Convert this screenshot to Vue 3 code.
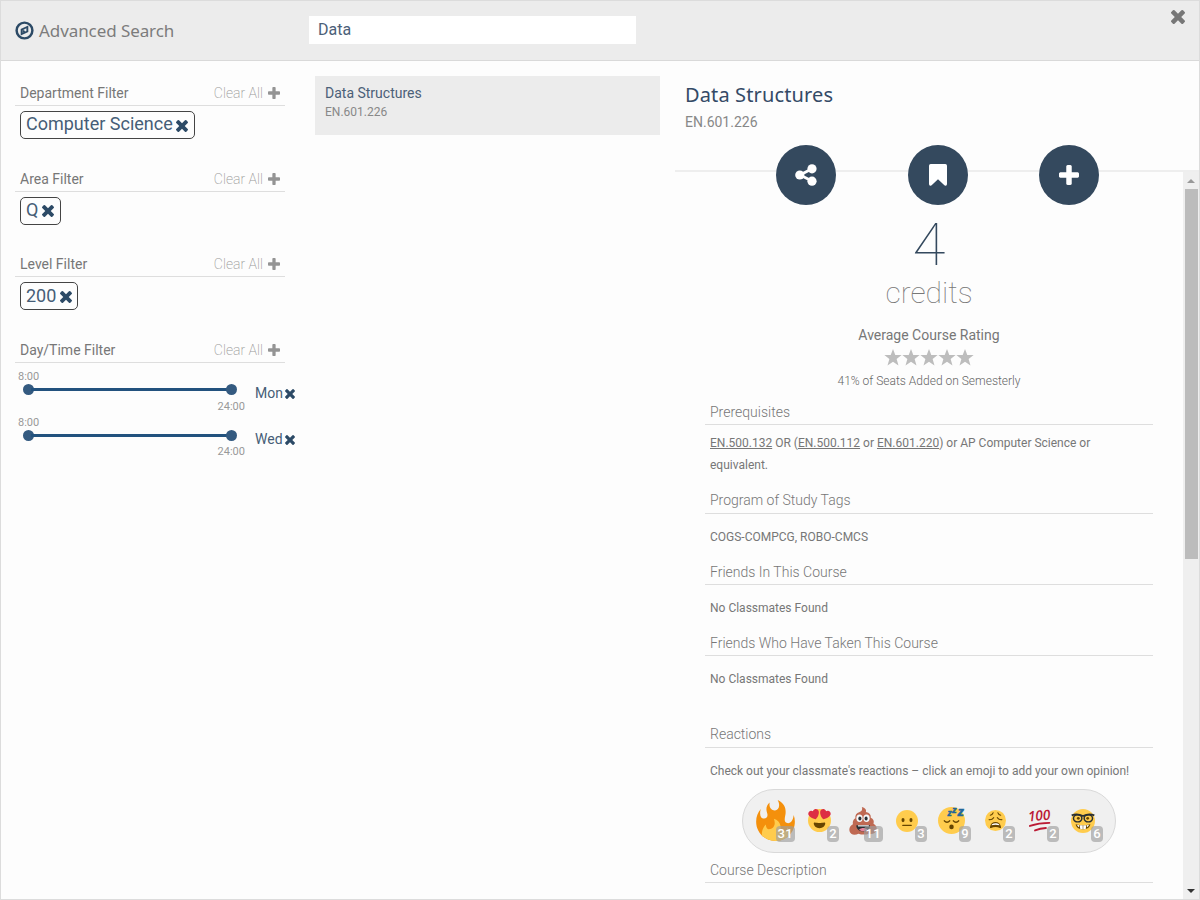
<script setup>
const filters = [
  { name: 'Department Filter', tag: 'Computer Science', cls: 'dept' },
  { name: 'Area Filter', tag: 'Q', cls: 'area' },
  { name: 'Level Filter', tag: '200', cls: 'level' },
]
const days = ['Mon', 'Wed']
const plus = 'M1600 736v192q0 40-28 68t-68 28h-416v416q0 40-28 68t-68 28h-192q-40 0-68-28t-28-68v-416h-416q-40 0-68-28t-28-68v-192q0-40 28-68t68-28h416v-416q0-40 28-68t68-28h192q40 0 68 28t28 68v416h416q40 0 68 28t28 68z'
const times = 'M1490 1322q0 40-28 68l-136 136q-28 28-68 28t-68-28l-294-294-294 294q-28 28-68 28t-68-28l-136-136q-28-28-28-68t28-68l294-294-294-294q-28-28-28-68t28-68l136-136q28-28 68-28t68 28l294 294 294-294q28-28 68-28t68 28l136 136q28 28 28 68t-28 68l-294 294 294 294q28 28 28 68z'
const reactions = [
  { id: 'fire', n: 31, size: 41 },
  { id: 'love', n: 2, size: 23 },
  { id: 'poop', n: 11, size: 28 },
  { id: 'neutral', n: 3, size: 22 },
  { id: 'sleep', n: 9, size: 27 },
  { id: 'weary', n: 2, size: 21 },
  { id: 'hundred', n: 2, size: 23 },
  { id: 'nerd', n: 6, size: 24 },
]
</script>

<template>
  <div class="modal">
    <header class="top">
      <svg class="compass" viewBox="0 0 20 20">
        <circle cx="10" cy="10" r="8.3" fill="none" stroke="currentColor" stroke-width="2.6" />
        <path fill="currentColor" fill-rule="evenodd" d="M14 4.8v6.7l-8 3.7V8.5zM8 9.8v2.6l4-2V7.6z" />
        <path fill="currentColor" d="M8 9.3l3.2 1.6L8 12.9z" />
      </svg>
      <h1>Advanced Search</h1>
      <div class="search">Data</div>
      <svg class="close" viewBox="302 366 1188 1188"><path fill="currentColor" :d="times" /></svg>
    </header>

    <div class="main">
      <aside class="filters">
        <section v-for="f in filters" :key="f.name" class="filter" :class="f.cls">
          <div class="fhead">
            <span>{{ f.name }}</span><span class="clear">Clear All</span>
            <svg class="plus" viewBox="192 128 1408 1408"><path fill="currentColor" :d="plus" /></svg>
          </div>
          <div class="tag"><span>{{ f.tag }}</span><svg viewBox="302 366 1188 1188"><path fill="currentColor" :d="times" /></svg></div>
        </section>
        <section class="filter">
          <div class="fhead">
            <span>Day/Time Filter</span><span class="clear">Clear All</span>
            <svg class="plus" viewBox="192 128 1408 1408"><path fill="currentColor" :d="plus" /></svg>
          </div>
          <div v-for="d in days" :key="d" class="day">
            <div class="slider">
              <div class="t1">8:00</div>
              <div class="track"><i></i><b></b><i></i></div>
              <div class="t2">24:00</div>
            </div>
            <div class="dname"><span>{{ d }}</span><svg viewBox="302 366 1188 1188"><path fill="currentColor" :d="times" /></svg></div>
          </div>
        </section>
      </aside>

      <div class="results">
        <div class="result">
          <div class="rname">Data Structures</div>
          <div class="rcode">EN.601.226</div>
        </div>
      </div>

      <article class="course">
        <div class="chead">
          <h2>Data Structures</h2>
          <div class="ccode">EN.601.226</div>
          <div class="actions">
            <div class="act"><svg width="22" height="22" viewBox="0 0 22 22"><path d="M17 4.7L5 11l12 6" fill="none" stroke="#fff" stroke-width="2.8" /><circle cx="17" cy="4.8" r="4.6" fill="#fff" /><circle cx="4.8" cy="11" r="4.6" fill="#fff" /><circle cx="17" cy="17.2" r="4.6" fill="#fff" /></svg></div>
            <div class="act"><svg width="18" height="22" viewBox="0 0 18 22"><path fill="#fff" d="M1.7 0h14.6Q18 0 18 1.7V20q0 2-1.6 1.8-.7-.1-1.3-.7L9 15.3l-6.1 5.8q-.6.6-1.3.7Q0 22 0 20V1.7Q0 0 1.7 0z" /></svg></div>
            <div class="act"><svg width="20" height="20" viewBox="192 128 1408 1408"><path fill="#fff" :d="plus" /></svg></div>
          </div>
        </div>
        <div class="cbody">
          <div class="detail">
            <div class="num">4</div>
            <div class="credits">credits</div>
            <div class="avg">Average Course Rating</div>
            <div class="stars"><svg v-for="s in 5" :key="s" viewBox="0 0 24 23"><path fill="#bdbdbd" d="M12 0l3.100 8h8.600l-6.800 5.400 2.500 9L12 17.400l-7.400 5 2.500-9L.300 8h8.600z" /></svg></div>
            <div class="seats">41% of Seats Added on Semesterly</div>

            <section class="s1"><h3>Prerequisites</h3><p><u>EN.500.132</u> OR (<u>EN.500.112</u> or <u>EN.601.220</u>) or AP Computer Science or<br>equivalent.</p></section>
            <section class="s2"><h3>Program of Study Tags</h3><p class="cogs">COGS-COMPCG, ROBO-CMCS</p></section>
            <section class="s3"><h3>Friends In This Course</h3><p>No Classmates Found</p></section>
            <section class="s4"><h3>Friends Who Have Taken This Course</h3><p>No Classmates Found</p></section>
            <section class="s5"><h3>Reactions</h3><p class="check">Check out your classmate's reactions – click an emoji to add your own opinion!</p>
              <div class="pill">
                <div v-for="r in reactions" :key="r.id" class="slot">
                  <svg :width="r.size" :height="r.size" viewBox="0 0 36 36">
                    <template v-if="r.id === 'fire'">
                      <path fill="#F4900C" d="M35 19c0-2.062-.367-4.039-1.04-5.868-.46 5.389-3.333 8.157-6.335 6.868-2.812-1.208-.917-5.917-.777-8.164.236-3.809-.012-8.169-6.931-11.794 2.875 5.5.333 8.917-2.333 9.125-2.958.231-5.667-2.542-4.667-7.042-3.238 2.386-3.332 6.402-2.333 9 1.042 2.708-.042 4.958-2.583 5.208-2.84.28-4.418-3.041-2.963-8.333C2.52 10.965 1 14.805 1 19c0 9.389 7.611 17 17 17s17-7.611 17-17z" />
                      <path fill="#FFCC4D" d="M28.394 23.999c.148 3.084-2.561 4.293-4.019 3.709-2.106-.843-1.541-2.291-2.083-5.291s-2.625-5.083-5.708-6c2.25 6.333-1.247 8.667-3.08 9.084-1.872.426-3.753-.001-3.968-4.007C7.352 23.668 6 26.676 6 30c0 .368.023.73.055 1.09C9.125 34.124 13.342 36 18 36s8.875-1.876 11.945-4.91c.032-.36.055-.722.055-1.09 0-2.187-.584-4.236-1.606-6.001z" />
                    </template>
                    <template v-else-if="r.id === 'poop'">
                      <path fill="#BF6952" d="M16.5 0c4.3 1 6.2 3.400 5.300 6.400 4.600.8 6.700 3.500 6.200 7.400 3.500 1.700 4.600 4.300 3.500 7.700 3.500 1.700 4.900 4.900 3.900 8.200-1.300 4.700-6.200 6-10 4.600-4.300 1.600-9 1.500-13.200 0C7.500 37 1.600 35.800.600 31c-.8-4 1-7.400 4.400-8.900-.5-3 .4-5.900 3.200-7.500-.6-4.300 1.300-7 5.400-8.300C16.500 5.400 17.700 3.500 16.500 0z" />
                      <ellipse cx="13.500" cy="14.500" rx="4" ry="4.700" fill="#F5F8FA" /><ellipse cx="22.500" cy="14.500" rx="4" ry="4.700" fill="#F5F8FA" />
                      <ellipse cx="14" cy="14.800" rx="2" ry="2.700" fill="#292F33" /><ellipse cx="22" cy="14.800" rx="2" ry="2.700" fill="#292F33" />
                      <path fill="#292F33" d="M9.500 23.500h17.500c.7 4-3.300 8-8.800 8s-9.300-4-8.700-8z" /><path fill="#F5F8FA" d="M11.500 23.500h14v1.500h-14z" /><path fill="#E8829B" d="M13 29c3-2.600 7.500-2.600 10.500 0-2.500 3-8 3.200-10.500 0z" />
                    </template>
                    <template v-else-if="r.id === 'hundred'">
                      <g transform="rotate(-5 18 12)"><text x="0" y="18" class="hund" textLength="35" lengthAdjust="spacingAndGlyphs">100</text></g>
                      <path fill="none" stroke="#BB1A34" stroke-width="3" stroke-linecap="round" d="M3 26.500c9-3 20-4.700 30.500-4.800M11 33.500c6-2.200 11-3.200 17-3.700" />
                    </template>
                    <template v-else>
                      <circle cx="18" cy="18" r="18" fill="#FFCC4D" />
                      <template v-if="r.id === 'love'">
                        <path fill="#DD2E44" d="M16.650 3.281C15.791.850 13.126-.426 10.694.431c-1.476.520-2.521 1.711-2.928 3.104-1.191-.829-2.751-1.100-4.225-.580C1.111 3.813-.167 6.480.692 8.911c.122.344.284.663.472.958 1.951 3.582 7.588 6.100 11.001 6.131 2.637-2.167 5.446-7.665 4.718-11.677-.038-.348-.113-.698-.233-1.042zm2.700 0C20.209.850 22.875-.426 25.306.431c1.476.520 2.521 1.711 2.929 3.104 1.191-.829 2.751-1.100 4.225-.580 2.430.858 3.707 3.525 2.850 5.956-.123.344-.284.663-.473.958-1.951 3.582-7.588 6.100-11.002 6.131-2.637-2.167-5.445-7.665-4.717-11.677.037-.348.112-.698.232-1.042z" />
                        <path fill="#664500" d="M18 21.849c-2.966 0-4.935-.346-7.369-.819-.557-.106-1.638 0-1.638 1.638 0 3.275 3.763 7.369 9.007 7.369s9.007-4.094 9.007-7.369c0-1.638-1.082-1.745-1.638-1.638-2.434.473-4.402.819-7.369.819" />
                      </template>
                      <template v-else-if="r.id === 'neutral'">
                        <ellipse cx="11.500" cy="16.500" rx="2.500" ry="3.500" fill="#664500" /><ellipse cx="24.500" cy="16.500" rx="2.500" ry="3.500" fill="#664500" /><path stroke="#664500" stroke-width="2" stroke-linecap="round" d="M11 25h14" />
                      </template>
                      <template v-else-if="r.id === 'sleep'">
                        <path fill="none" stroke="#664500" stroke-width="2" stroke-linecap="round" d="M8.500 18.500c2 2.500 5 2.500 7 0M20.500 18.500c2 2.500 5 2.500 7 0" />
                        <ellipse cx="18" cy="26.500" rx="3" ry="3.300" fill="#664500" />
                        <text x="12.500" y="12.500" class="zzz" font-size="11">z</text><text x="18.500" y="8.500" class="zzz" font-size="12">z</text><text x="26" y="12.500" class="zzz" font-size="17">z</text>
                      </template>
                      <template v-else-if="r.id === 'weary'">
                        <path fill="none" stroke="#664500" stroke-width="1.800" stroke-linecap="round" d="M7 16.500c3 .4 6-.7 8-3.500M29 16.500c-3 .4-6-.7-8-3.500M9 9c2-.3 4-1.800 5-4.200M27 9c-2-.3-4-1.800-5-4.200" />
                        <path fill="#664500" d="M8.500 29.500c.8-6 4.500-9 9.500-9s8.700 3 9.500 9c.1 1.500-1 1.900-2 1.300-4-2.200-11-2.200-15 0-1 .6-2.100.2-2-1.300z" /><path fill="#fff" d="M12 24.300c3-2.300 9-2.300 12 0l.8 2c-4-1.500-9.600-1.500-13.600 0z" />
                      </template>
                      <template v-else>
                        <path fill="#664500" d="M7 23c7 2 15 2 22 0-.5 4.500-5 7.500-11 7.500S7.500 27.500 7 23z" /><path fill="#fff" d="M13 24.500h4.600v6h-3.600zM18.400 24.500H23l-1 6h-3.600zM9 23.800l3.300.700-.3 2.800c-1.500-.8-2.600-2-3-3.500zM27 23.800l-3.300.700.3 2.800c1.500-.8 2.600-2 3-3.500z" />
                        <ellipse cx="10" cy="14" rx="6.300" ry="5.300" fill="#FFCC4D" stroke="#292F33" stroke-width="2.200" /><ellipse cx="26" cy="14" rx="6.300" ry="5.300" fill="#FFCC4D" stroke="#292F33" stroke-width="2.200" />
                        <path fill="none" stroke="#292F33" stroke-width="2.600" d="M1 9.500c5-2 11-2 17 1 6-3 12-3 17-1" /><circle cx="11" cy="14" r="2.100" fill="#664500" /><circle cx="25" cy="14" r="2.100" fill="#664500" />
                      </template>
                    </template>
                  </svg>
                  <span class="badge">{{ r.n }}</span>
                </div>
              </div>
            </section>
            <section class="s6"><h3>Course Description</h3></section>
          </div>
          <div class="scroll"><span class="up"></span><span class="thumb"></span><span class="down"></span></div>
        </div>
      </article>
    </div>
  </div>
</template>

<style>
body { margin: 0; }
</style>

<style scoped>
* { box-sizing: border-box; }
h1, h2, h3, p { margin: 0; font-weight: 400; }
svg { display: block; flex: none; overflow: visible; }
.modal { width: 1200px; height: 900px; overflow: hidden; background: #fdfdfd; border: 1px solid #dcdcdc; font-family: Roboto, "Liberation Sans", sans-serif; color: #777; display: flex; flex-direction: column; white-space: nowrap; }
.top { height: 60px; flex: none; background: #ececec; border-bottom: 1px solid #d9d9d9; display: flex; align-items: center; padding-left: 14px; padding-right: 14px; }
.compass { width: 19px; height: 19px; color: #2c4a66; }
h1 { font: 400 17px/24px "Noto Sans", "Open Sans", sans-serif; margin-left: 5px; width: 270px; color: #7c7c7c; letter-spacing: -.08px; }
.search { width: 327px; height: 28px; margin-bottom: 1px; background: #fff; padding-left: 9px; font-size: 16px; line-height: 27px; color: #4b6078; }
.close { width: 14px; height: 14px; color: #777; margin-left: auto; align-self: flex-start; margin-top: 8.500px; }
.main { flex: 1; display: flex; min-height: 0; }
.filters { width: 314px; padding: 19px 0 0 14px; }
.filter { height: 85.700px; }
.fhead { width: 270px; height: 26px; border-bottom: 1px solid #dedede; padding: 0 5px; display: flex; align-items: center; font-size: 14px; }
.area .fhead { padding-top: 1px; }
.clear { margin-left: auto; font-weight: 200; color: #999; }
.plus { width: 12px; height: 12px; color: #949494; margin-left: 5px; }
.tag { margin: 5px 0 0 5px; height: 28px; border: 1.500px solid #444; border-radius: 5px; display: inline-flex; align-items: center; padding: 0 5px; font-size: 18px; color: #465d77; }
.tag span { line-height: 24px; margin-top: -1px; }
.dept .tag span { margin-top: -2px; }
.tag svg { width: 12px; height: 12px; color: #2c4a66; margin: 1px .5px 0 3.500px; }
.area .tag svg { margin-left: 4px; margin-right: 1px; }
.day { height: 45.500px; display: flex; padding-left: 3px; }
.slider { width: 228px; padding-top: 7px; font-size: 11px; line-height: 14px; color: #999; }
.track { display: flex; align-items: center; height: 13px; width: 218.500px; padding-left: 5px; margin-top: -1px; }
.track i { width: 11px; height: 11px; border-radius: 50%; background: #345a80; flex: none; }
.track b { flex: 1; height: 3px; background: #22527e; margin: 0 -3px; }
.t2 { width: 227px; text-align: right; margin-top: 3.500px; }
.dname { display: flex; align-items: center; height: 20px; margin: 20px 0 0 9px; font-size: 14px; color: #465d77; }
.dname svg { width: 10px; height: 10px; margin: 2px 0 0 2.500px; color: #2c4a66; }
.results { width: 360px; padding-top: 15px; }
.result { width: 345px; height: 59px; background: #ececec; padding: 8px 10px; }
.rname { font-size: 14px; line-height: 18px; color: #4b6078; }
.rcode { font-size: 12px; line-height: 20px; color: #888; }
.course { width: 524px; display: flex; flex-direction: column; }
.chead { height: 111px; flex: none; border-bottom: 2px solid #eee; }
h2 { font: 400 20px/28px "Noto Sans", "Open Sans", sans-serif; letter-spacing: .13px; padding: 20px 0 0 10px; color: #344a66; }
.ccode { padding-left: 10px; font-size: 14px; line-height: 26px; color: #888; }
.actions { display: flex; gap: 71.500px; padding: 10px 0 0 101px; position: relative; z-index: 1; }
.act { width: 60px; height: 60px; border-radius: 50%; background: #34495e; display: flex; align-items: center; justify-content: center; }
.cbody { flex: 1; min-height: 0; display: flex; }
.detail { width: 448px; flex: none; margin-left: 30px; margin-right: 30px; }
.num { margin-top: 41px; font-size: 60px; line-height: 64px; font-weight: 100; color: #34495e; text-align: center; }
.credits { margin-top: -2px; font-size: 30px; line-height: 36px; font-weight: 100; text-align: center; color: #777; }
.avg { margin-top: 14px; font-size: 14px; line-height: 20px; text-align: center; }
.stars { display: flex; justify-content: center; height: 24px; align-items: center; }
.stars svg { width: 18px; height: 17px; }
.seats { font-size: 12px; line-height: 20px; height: 32px; text-align: center; padding-top: 2px; font-weight: 300; color: #666; }
h3 { height: 24px; border-bottom: 1px solid #dedede; padding-left: 5px; font-size: 14px; line-height: 22px; font-weight: 300; color: #777; }
p { font-size: 12px; line-height: 22px; padding: 12px 5px 0; }
.s1 { height: 89px; }
.s1 p { padding-top: 7px; }
.s2 { height: 71px; }
.s3 { height: 71px; }
.s4 { height: 92px; }
.s5 { height: 135px; }
.s4 h3, .s3 h3 { line-height: 23px; }
.s5 h3, .s2 h3 { line-height: 21px; }
.pill { margin: 7px 0 0 37px; width: 374px; height: 64px; border: 1px solid #d9d9d9; border-radius: 32px; background: #f0f0f0; display: flex; padding-left: 10px; }
.slot { width: 44px; height: 61px; display: flex; align-items: center; justify-content: center; position: relative; }
.badge { position: absolute; right: 2px; bottom: 9px; height: 16px; padding: 0 2px; border-radius: 4px; background: rgba(158, 158, 158, .65); color: #fff; font-size: 13px; line-height: 16px; font-weight: 500; letter-spacing: .3px; }
.hund { font: italic 600 22px "Open Sans", sans-serif; fill: #bb1a34; }
.zzz { font-family: "Liberation Sans", sans-serif; font-weight: 700; font-style: italic; fill: #226699; stroke: #226699; stroke-width: .8; }
.scroll { width: 16px; flex: none; background: #efefef; display: flex; flex-direction: column; align-items: center; }
.up, .down { border: 4px solid transparent; flex: none; }
.up { border-top: 0; border-bottom-color: #999; margin-top: 7px; }
.thumb { width: 13px; height: 370px; background: #bcbcbc; margin-top: 6px; }
.down { border-bottom: 0; border-top-color: #333; margin-top: auto; margin-bottom: 6px; }
</style>
